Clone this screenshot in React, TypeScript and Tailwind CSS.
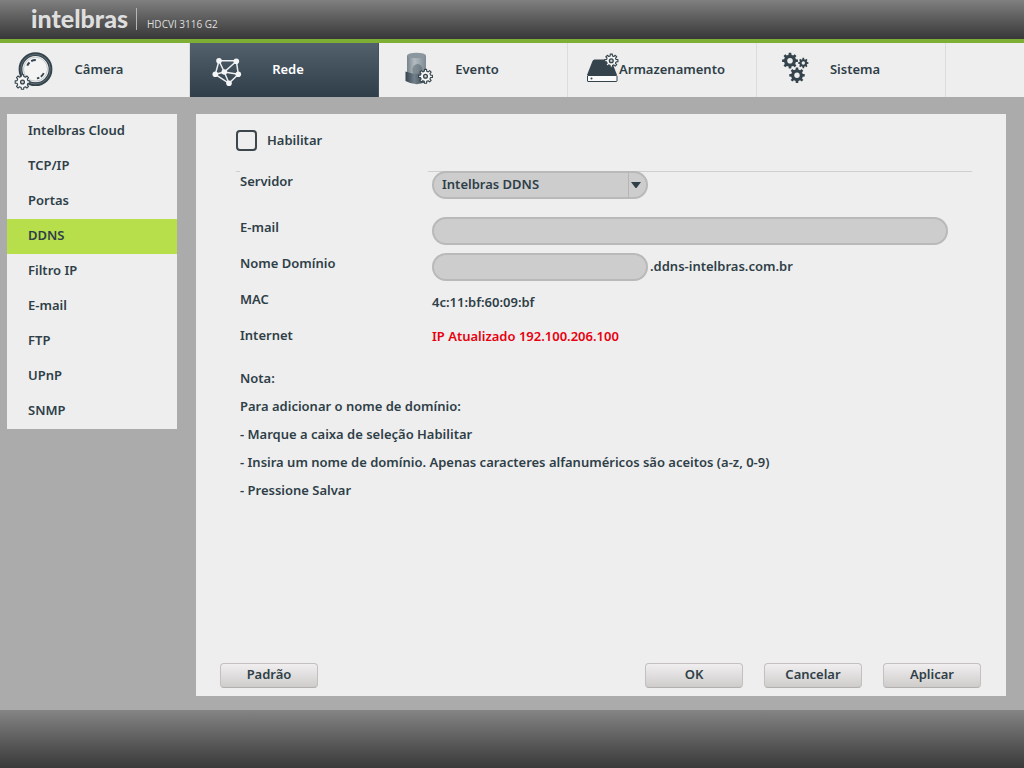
import { useState } from "react";
import type { ReactNode } from "react";

const DARK = "#34434c";

// cog outline with square-ish teeth, built around (cx, cy)
const gearPath = (
  cx: number,
  cy: number,
  outer: number,
  inner: number,
  teeth = 8
) => {
  const step = (Math.PI * 2) / teeth;
  const points: string[] = [];
  for (let i = 0; i < teeth; i++) {
    const a = i * step - Math.PI / 2;
    const corners = [
      [inner, -0.3],
      [outer, -0.2],
      [outer, 0.2],
      [inner, 0.3],
    ];
    for (const [r, k] of corners) {
      const x = cx + r * Math.cos(a + k * step);
      const y = cy + r * Math.sin(a + k * step);
      points.push(`${x.toFixed(2)} ${y.toFixed(2)}`);
    }
  }
  return `M${points.join("L")}Z`;
};

function LightGear({ cx, cy, r }: { cx: number; cy: number; r: number }) {
  return (
    <>
      <path
        d={gearPath(cx, cy, r, r - 1.8)}
        fill="#f6f6f6"
        stroke={DARK}
        strokeWidth="1.1"
        strokeLinejoin="round"
      />
      <circle cx={cx} cy={cy} r="1.9" fill="#c9ced1" stroke={DARK} strokeWidth="1.3" />
    </>
  );
}

function TabIcon({ children }: { children: ReactNode }) {
  return (
    <svg
      viewBox="0 0 37 40"
      className="ml-3.5 h-10 w-[37px] shrink-0 overflow-visible"
      aria-hidden="true"
    >
      {children}
    </svg>
  );
}

function CameraIcon() {
  return (
    <TabIcon>
      <circle cx="20.5" cy="19.2" r="15" fill="#f4f4f4" stroke={DARK} strokeWidth="3.8" />
      <circle cx="20.5" cy="19.2" r="14.8" fill="none" stroke="#6b7880" strokeWidth="0.8" />
      <circle cx="20.5" cy="19.2" r="12" fill="none" stroke="#b4bbbf" strokeWidth="0.8" />
      <path d="M12.3 15.6a9.2 9.2 0 0 1 2.2-3.1M16.2 11.1a9.2 9.2 0 0 1 4.6-1.1" fill="none" stroke={DARK} strokeWidth="2" />
      <path d="M28.8 23.2a9.2 9.2 0 0 1-3 3.5M24.3 27.6a9.2 9.2 0 0 1-2.4.7" fill="none" stroke={DARK} strokeWidth="1.8" />
      <LightGear cx={7.5} cy={32} r={7.4} />
    </TabIcon>
  );
}

const nodes = [
  [15, 10.7],
  [32.3, 11.3],
  [11.3, 24.3],
  [20.3, 22],
  [34.3, 24.3],
  [25, 33.3],
];

function NetworkIcon() {
  return (
    <TabIcon>
      <path
        d="M15 10.7H32.3L34.3 24.3L25 33.3L11.3 24.3ZM15 10.7L20.3 22L32.3 11.3M11.3 24.3L20.3 22L34.3 24.3M20.3 22L25 33.3"
        fill="none"
        stroke="#eceff1"
        strokeWidth="1.5"
      />
      {nodes.map(([x, y]) => (
        <circle key={`${x}-${y}`} cx={x} cy={y} r="2.8" fill="#f3f5f6" />
      ))}
    </TabIcon>
  );
}

function EventIcon() {
  return (
    <TabIcon>
      <defs>
        <linearGradient id="glass" x1="0" y1="0" x2="1" y2="0">
          <stop offset="0" stopColor="#76838b" />
          <stop offset="0.4" stopColor="#b4bcc1" />
          <stop offset="1" stopColor="#7d8a91" />
        </linearGradient>
        <linearGradient id="base" x1="0" y1="0" x2="1" y2="0">
          <stop offset="0" stopColor="#34434c" />
          <stop offset="0.4" stopColor="#71808a" />
          <stop offset="1" stopColor="#2c3942" />
        </linearGradient>
      </defs>
      <path d="M14 5.5V26H33V5.5Z" fill="url(#glass)" />
      <ellipse cx="23.5" cy="5.5" rx="9.5" ry="2.8" fill="#8b979e" />
      <ellipse cx="24.5" cy="20" rx="5" ry="6" fill="#4f5d66" opacity="0.5" />
      <path d="M12.5 21.5Q24 26 34.5 21.5V31Q24 37.5 12.5 31Z" fill="url(#base)" />
      <LightGear cx={32.5} cy={26.3} r={7} />
    </TabIcon>
  );
}

function StorageIcon() {
  return (
    <TabIcon>
      <path d="M12.5 9.5H29L35 25H5L10.5 11Q11.2 9.5 12.5 9.5Z" fill={DARK} />
      <rect x="5.5" y="25.5" width="29.5" height="6" rx="0.5" fill="#fafafa" stroke={DARK} />
      <circle cx="9.5" cy="28.5" r="1" fill={DARK} />
      <LightGear cx={29.3} cy={10.7} r={6.7} />
    </TabIcon>
  );
}

function SystemIcon() {
  const gears = [
    { cx: 19, cy: 10.7, r: 8, hole: 2.8 },
    { cx: 32.3, cy: 13, r: 5.2, hole: 1.7 },
    { cx: 26, cy: 25.3, r: 7.8, hole: 2.7 },
  ];
  return (
    <TabIcon>
      {gears.map(({ cx, cy, r, hole }) => (
        <g key={cx}>
          <path d={gearPath(cx, cy, r, r * 0.76)} fill={DARK} />
          <circle cx={cx} cy={cy} r={hole} fill="#eee" />
        </g>
      ))}
    </TabIcon>
  );
}

const tabs = [
  { name: "Câmera", Icon: CameraIcon },
  { name: "Rede", Icon: NetworkIcon },
  { name: "Evento", Icon: EventIcon },
  { name: "Armazenamento", Icon: StorageIcon },
  { name: "Sistema", Icon: SystemIcon },
];

const menu = [
  "Intelbras Cloud",
  "TCP/IP",
  "Portas",
  "DDNS",
  "Filtro IP",
  "E-mail",
  "FTP",
  "UPnP",
  "SNMP",
];

const notes = [
  "Nota:",
  "Para adicionar o nome de domínio:",
  "- Marque a caixa de seleção Habilitar",
  "- Insira um nome de domínio. Apenas caracteres alfanuméricos são aceitos (a-z, 0-9)",
  "- Pressione Salvar",
];

const labelClass = "ml-1 mr-1 w-[188px] shrink-0 self-start leading-5";
const fieldClass =
  "h-7 rounded-full border-2 border-[#b9b9b9] bg-[#cdcdcd] px-2 outline-none";

function PanelButton({
  children,
  onClick,
}: {
  children: ReactNode;
  onClick?: () => void;
}) {
  return (
    <button
      type="button"
      onClick={onClick}
      className="h-[25px] w-[98px] rounded border border-[#c4c0c0] border-b-[#b4b0b0] bg-linear-to-b from-[#f0eeee] to-[#cfcccc] pb-1 leading-5"
    >
      {children}
    </button>
  );
}

export default function App() {
  const [tab, setTab] = useState("Rede");
  const [item, setItem] = useState("DDNS");
  const [enabled, setEnabled] = useState(false);
  const [email, setEmail] = useState("");
  const [domain, setDomain] = useState("");

  const reset = () => {
    setEnabled(false);
    setEmail("");
    setDomain("");
  };

  return (
    <div className="flex min-h-screen flex-col bg-[#ababab] font-['Noto_Sans',sans-serif] text-[13px] font-semibold text-[#2f3f48]">
      <header className="flex h-[43px] items-start border-b-4 border-[#7fae35] bg-linear-to-b from-[#808080] to-[#383838] pt-2 pl-[31px] text-[#dedede]">
        <span className="w-[105px] font-['Lato',sans-serif] text-[25px] leading-5 font-black">
          intelbras
        </span>
        <span className="flex h-[22px] items-end border-l border-[#b5b5b5] pl-2.5 font-['Open_Sans',sans-serif] text-[10px] leading-3 font-normal">
          HDCVI 3116 G2
        </span>
      </header>

      <nav className="flex h-[54px] bg-[#eee] pl-px">
        {tabs.map(({ name, Icon }) => (
          <button
            key={name}
            type="button"
            onClick={() => setTab(name)}
            className={`flex w-[189px] items-center border-r ${
              tab === name
                ? "border-[#43525c] bg-linear-to-b from-[#53616d] to-[#2f3e48] text-white"
                : "border-[#dcdcdc]"
            }`}
          >
            <Icon />
            <span className="w-[94px] text-center whitespace-nowrap">{name}</span>
          </button>
        ))}
      </nav>

      <div className="flex flex-1 gap-[19px] pt-[17px] pr-[18px] pb-3.5 pl-[7px]">
        <aside className="w-[170px] shrink-0 self-start bg-[#eee]">
          <ul>
            {menu.map((name) => (
              <li key={name}>
                <a
                  href="#"
                  onClick={() => setItem(name)}
                  className={`block h-[35px] pl-[21px] leading-[33px] ${
                    item === name ? "bg-[#b7df4b]" : ""
                  }`}
                >
                  {name}
                </a>
              </li>
            ))}
          </ul>
        </aside>

        <main className="flex flex-1 flex-col bg-[#eee] pt-4">
          <form className="pr-[34px] pl-10">
            <label className="flex h-[21px] items-center gap-2.5">
              <input
                type="checkbox"
                checked={enabled}
                onChange={(e) => setEnabled(e.target.checked)}
                className="size-[21px] appearance-none rounded border-2 border-[#3c474d] checked:bg-[#3c474d]"
              />
              Habilitar
            </label>

            <div className="mt-5 border-t border-[#cfcfcf]">
              <div className="-mt-px flex h-7 items-center">
                <label htmlFor="server" className={`${labelClass} bg-[#eee]`}>
                  Servidor
                </label>
                <div className="relative">
                  <select
                    id="server"
                    className={`${fieldClass} w-[216px] appearance-none`}
                  >
                    <option>Intelbras DDNS</option>
                  </select>
                  <span className="pointer-events-none absolute inset-y-0.5 right-0 flex w-5 items-center border-l border-[#b5b5b5] pl-0.5">
                    <svg viewBox="0 0 10 6" className="h-1.5 w-2.5" aria-hidden="true">
                      <path d="M0 0H10L5.5 6H4.5Z" fill="#2f3f48" />
                    </svg>
                  </span>
                </div>
              </div>
            </div>

            <div className="mt-[18px] mr-6 flex h-7 items-center">
              <label htmlFor="email" className={labelClass}>
                E-mail
              </label>
              <input
                id="email"
                type="text"
                value={email}
                onChange={(e) => setEmail(e.target.value)}
                className={`${fieldClass} min-w-0 flex-1`}
              />
            </div>

            <div className="mt-2 flex h-7 items-center">
              <label htmlFor="domain" className={labelClass}>
                Nome Domínio
              </label>
              <input
                id="domain"
                type="text"
                value={domain}
                onChange={(e) => setDomain(e.target.value)}
                className={`${fieldClass} w-[216px]`}
              />
              <span className="ml-0.5">.ddns-intelbras.com.br</span>
            </div>

            <div className="mt-2 flex h-7 items-center">
              <span className={labelClass}>MAC</span>
              <span>4c:11:bf:60:09:bf</span>
            </div>

            <div className="mt-2 flex h-6 items-center">
              <span className={labelClass}>Internet</span>
              <span className="text-[#e8000f]">IP Atualizado 192.100.206.100</span>
            </div>

            <div className="mt-[15px] ml-1 leading-7">
              {notes.map((line) => (
                <p key={line}>{line}</p>
              ))}
            </div>
          </form>

          <div className="mt-auto flex gap-[21px] pr-[25px] pb-2 pl-6">
            <PanelButton onClick={reset}>Padrão</PanelButton>
            <div className="ml-auto flex gap-[21px]">
              <PanelButton>OK</PanelButton>
              <PanelButton>Cancelar</PanelButton>
              <PanelButton>Aplicar</PanelButton>
            </div>
          </div>
        </main>
      </div>

      <footer className="h-[58px] bg-linear-to-b from-[#858585] to-[#3a3a3a]" />
    </div>
  );
}
